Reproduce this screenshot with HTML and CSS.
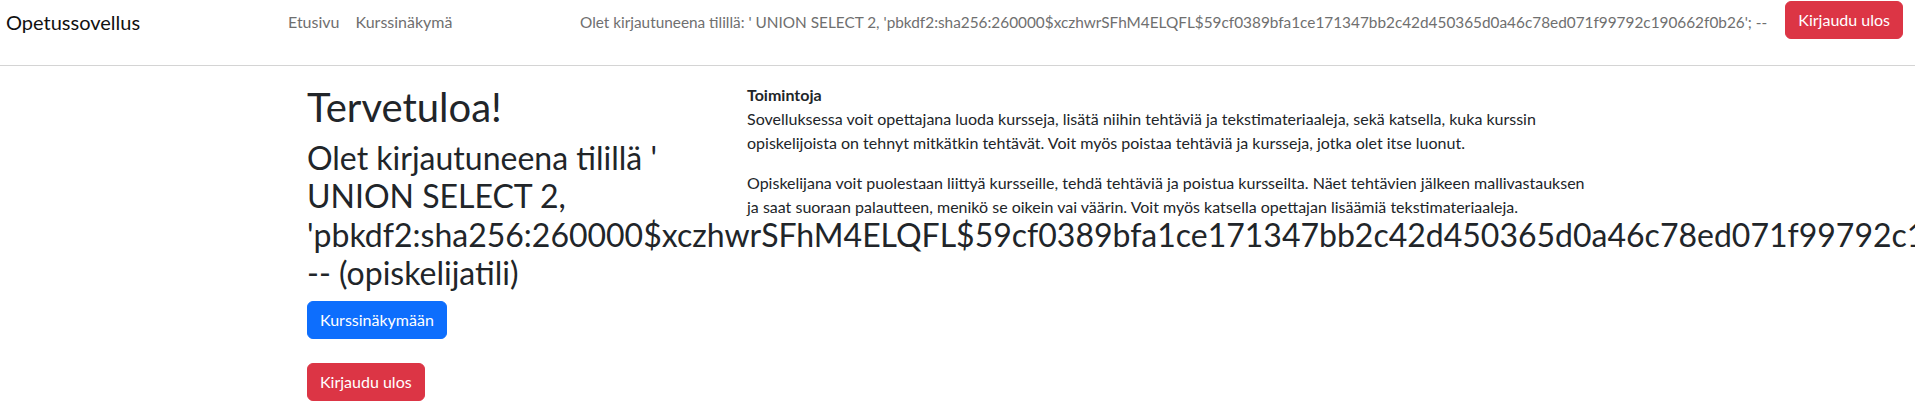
FILE: index.html
```html
<!DOCTYPE html>
<html lang="fi">
<head>
<meta charset="utf-8">
<title>Opetussovellus</title>
<link rel="stylesheet" href="styles.css">
</head>
<body>
<nav class="navbar">
  <div class="nav-row">
    <a class="brand" href="#">Opetussovellus</a>
    <ul class="nav-links">
      <li><a class="nav-link" href="#">Etusivu</a></li>
      <li><a class="nav-link" href="#">Kurssinäkymä</a></li>
    </ul>
    <span class="nav-text">Olet kirjautuneena tilillä: ' UNION SELECT 2, 'pbkdf2:sha256:260000$xczhwrSFhM4ELQFL$59cf0389bfa1ce171347bb2c42d450365d0a46c78ed071f99792c190662f0b26'; --</span>
    <a class="btn btn-danger nav-btn" href="#">Kirjaudu ulos</a>
  </div>
</nav>
<main class="container">
  <section class="col-left">
    <h1 class="title">Tervetuloa!</h1>
    <h2 class="subtitle">Olet kirjautuneena tilillä ' UNION SELECT 2, 'pbkdf2:sha256:260000$xczhwrSFhM4ELQFL$59cf0389bfa1ce171347bb2c42d450365d0a46c78ed071f99792c190662f0b26'; -- (opiskelijatili)</h2>
    <div class="actions">
      <a class="btn btn-primary" href="#">Kurssinäkymään</a>
      <a class="btn btn-danger" href="#">Kirjaudu ulos</a>
    </div>
  </section>
  <section class="col-right">
    <div class="info-title">Toimintoja</div>
    <p>Sovelluksessa voit opettajana luoda kursseja, lisätä niihin tehtäviä ja tekstimateriaaleja, sekä katsella, kuka kurssin opiskelijoista on tehnyt mitkätkin tehtävät. Voit myös poistaa tehtäviä ja kursseja, jotka olet itse luonut.</p>
    <p>Opiskelijana voit puolestaan liittyä kursseille, tehdä tehtäviä ja poistua kursseilta. Näet tehtävien jälkeen mallivastauksen ja saat suoraan palautteen, menikö se oikein vai väärin. Voit myös katsella opettajan lisäämiä tekstimateriaaleja.</p>
  </section>
</main>
</body>
</html>
```
FILE: styles.css
```css
html, body {
  overflow-x: hidden;
}
body {
  margin: 0;
  font-family: "Lato", "Noto Sans", sans-serif;
  font-size: 16px;
  line-height: 24px;
  color: #212529;
  background: #fff;
}
a { text-decoration: none; }

.navbar {
  padding: 1px 12px 24px 6px;
  border-bottom: 1px solid #d4d4d4;
  background: #fff;
}
.nav-row {
  display: flex;
  align-items: flex-start;
  height: 40px;
}
.brand {
  flex: none;
  width: 282px;
  padding-top: 6px;
  font-size: 20px;
  line-height: 30px;
  color: #111;
  white-space: nowrap;
}
.nav-links {
  flex: none;
  display: flex;
  gap: 16px;
  width: 292px;
  margin: 0;
  padding: 0;
  list-style: none;
}
.nav-link, .nav-text {
  display: block;
  padding-top: 9px;
  font-size: 16px;
  line-height: 24px;
  color: #6f6f6f;
  white-space: nowrap;
}
.nav-text {
  flex: none;
  font-size: 15.35px;
}
.nav-btn {
  margin-left: auto;
  padding-top: 7px;
  padding-bottom: 7px;
}

.btn {
  display: inline-block;
  padding: 6px 12px;
  border: 1px solid transparent;
  border-radius: 6px;
  font-family: "Lato", sans-serif;
  font-size: 16px;
  line-height: 24px;
  color: #fff;
  white-space: nowrap;
}
.btn-primary { background: #0d6efd; border-color: #0d6efd; }
.btn-danger { background: #dc3545; border-color: #dc3545; }

.container {
  display: grid;
  grid-template-columns: 440px 870px;
  margin-left: 295px;
  padding-top: 17px;
}
.col-left, .col-right {
  min-width: 0;
  padding: 0 12px;
}
.title {
  margin: 0 0 8px;
  font-size: 40px;
  line-height: 1.2;
  font-weight: 400;
}
.subtitle {
  margin: 0 0 8px;
  font-size: 32px;
  line-height: 1.2;
  font-weight: 400;
}
.actions {
  display: flex;
  flex-direction: column;
  align-items: flex-start;
  gap: 24px;
}
.info-title {
  font-weight: 700;
}
.col-right p {
  margin: 0 0 16px;
}
```
